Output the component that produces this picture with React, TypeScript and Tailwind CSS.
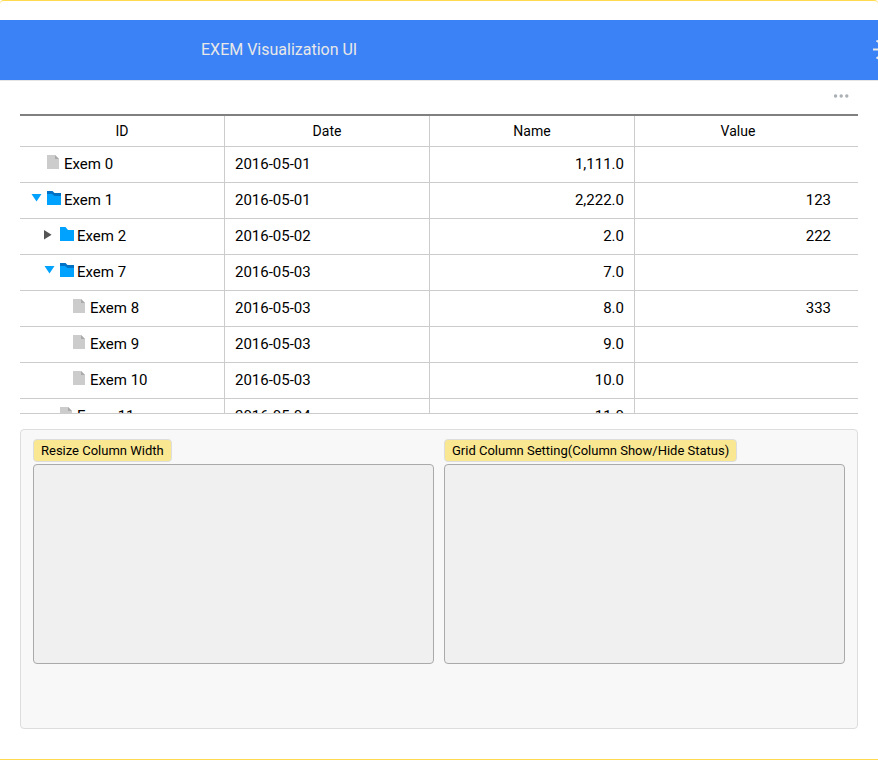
type Row = {
  name: string;
  kind: 'file' | 'folder';
  state?: 'open' | 'closed';
  indent: string;
  date: string;
  amount: string;
  value?: string;
};

const rows: Row[] = [
  { name: 'Exem 0', kind: 'file', indent: 'pl-[10px]', date: '2016-05-01', amount: '1,111.0' },
  { name: 'Exem 1', kind: 'folder', state: 'open', indent: 'pl-[10px]', date: '2016-05-01', amount: '2,222.0', value: '123' },
  { name: 'Exem 2', kind: 'folder', state: 'closed', indent: 'pl-[23px]', date: '2016-05-02', amount: '2.0', value: '222' },
  { name: 'Exem 7', kind: 'folder', state: 'open', indent: 'pl-[23px]', date: '2016-05-03', amount: '7.0' },
  { name: 'Exem 8', kind: 'file', indent: 'pl-[36px]', date: '2016-05-03', amount: '8.0', value: '333' },
  { name: 'Exem 9', kind: 'file', indent: 'pl-[36px]', date: '2016-05-03', amount: '9.0' },
  { name: 'Exem 10', kind: 'file', indent: 'pl-[36px]', date: '2016-05-03', amount: '10.0' },
  { name: 'Exem 11', kind: 'file', indent: 'pl-[23px]', date: '2016-05-04', amount: '11.0' },
];

function Arrow({ state }: { state?: 'open' | 'closed' }) {
  return (
    <svg width="17" height="36" className="shrink-0">
      {state === 'open' && <path d="M1.5 11h10l-5 7.5z" fill="#00a2ff" />}
      {state === 'closed' && <path d="M1 11l7.6 4.8L1 20.6z" fill="#555" />}
    </svg>
  );
}

function NodeIcon({ kind, open }: { kind: Row['kind']; open: boolean }) {
  return (
    <svg width="17" height="36" className="shrink-0">
      {kind === 'file' ? (
        <>
          <path d="M0 8h8l4 4v10H0z" fill="#ccc" />
          <path d="M8 8l4 4H8z" fill="#aaa" />
        </>
      ) : (
        <>
          {open && <path d="M0 8h5.5l2 2H14v4H0z" fill="#0072c6" />}
          <path d={open ? 'M0 11h5l2.5 2H14v9H0z' : 'M0 8h5.5l2.5 3h6v11H0z'} fill="#00a2ff" />
        </>
      )}
    </svg>
  );
}

const grid = 'grid grid-cols-[205px_205px_205px_223px]';

function Panel({ label }: { label: string }) {
  return (
    <div className="flex w-[401px] flex-col items-start">
      <span className="h-[23px] rounded-[4px] border border-[#ddd] bg-[#fae791] px-[7px] text-[13px] leading-[22px] text-black">
        {label}
      </span>
      <div className="mt-[2px] h-[200px] w-full rounded-[4px] border border-[#aaa] bg-[#f0f0f0]" />
    </div>
  );
}

export default function App() {
  return (
    <div className="flex h-[760px] w-[878px] flex-col overflow-hidden rounded-t-[4px] border-y border-[#ffdb4d] bg-white font-[Roboto,sans-serif] text-black">
      <header className="mt-[19px] flex h-[61px] shrink-0 items-center justify-between border-b border-[#e5e5e5] bg-[#3b82f6] pl-[201px]">
        <span className="text-[16px] leading-none text-[#e8e8e8]">EXEM Visualization UI</span>
        <svg width="5" height="20" fill="none" stroke="#e8e8e8" strokeWidth="2">
          <path d="M0 9.5h5M3.5 0.5l2 1.5M3.5 18.5l2-1.5" />
        </svg>
      </header>
      <div className="flex h-[33px] shrink-0 justify-end pr-[29px] pt-[13px]">
        <svg width="15" height="5" fill="#abb0b5">
          <circle cx="1.6" cy="2" r="1.7" />
          <circle cx="7.2" cy="2" r="1.7" />
          <circle cx="12.8" cy="2" r="1.7" />
        </svg>
      </div>
      <div className="mx-5 flex h-[300px] w-[838px] shrink-0 flex-col overflow-hidden border-b border-t-2 border-b-[#ccc] border-t-[#808080]">
        <div className={`${grid} h-[31px] shrink-0 border-b border-[#ccc] text-center text-[14px] leading-[31px] text-black`}>
          <span className="border-r border-[#ccc]">ID</span>
          <span className="border-r border-[#ccc]">Date</span>
          <span className="border-r border-[#ccc]">Name</span>
          <span className="pr-[17px]">Value</span>
        </div>
        {rows.map((row) => (
          <div key={row.name} className={`${grid} h-9 shrink-0 border-b border-[#ccc] text-[15px] leading-[35px]`}>
            <div className={`flex overflow-hidden border-r border-[#ccc] ${row.indent}`}>
              <Arrow state={row.state} />
              <NodeIcon kind={row.kind} open={row.state === 'open'} />
              <span className="whitespace-nowrap">{row.name}</span>
            </div>
            <div className="border-r border-[#ccc] pl-[10px]">{row.date}</div>
            <div className="border-r border-[#ccc] pr-[10px] text-right">{row.amount}</div>
            <div className="pr-[27px] text-right">{row.value}</div>
          </div>
        ))}
      </div>
      <section className="mx-5 mt-[15px] flex h-[300px] shrink-0 gap-[10px] rounded-[4px] border border-[#ddd] bg-[#f8f8f8] pl-[12px] pt-[9px]">
        <Panel label="Resize Column Width" />
        <Panel label="Grid Column Setting(Column Show/Hide Status)" />
      </section>
    </div>
  );
}
